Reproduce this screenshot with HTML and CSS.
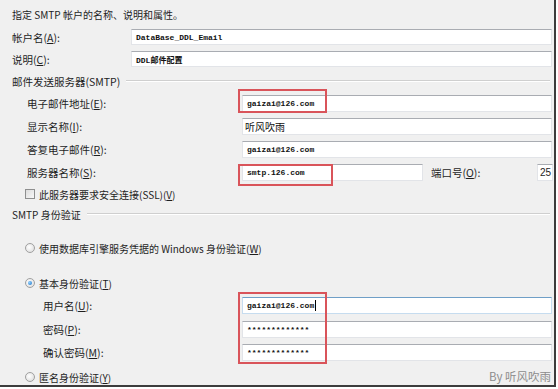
FILE: index.html
```html
<!DOCTYPE html>
<html>
<head>
<meta charset="utf-8">
<link rel="stylesheet" href="styles.css">
</head>
<body>
<div class="frame">
  <div class="intro">指定 SMTP 帐户的名称、说明和属性。</div>

  <div class="row top">
    <span class="label">帐户名(<u>A</u>):</span>
    <div class="field wide mono">DataBase_DDL_Email</div>
  </div>
  <div class="row top">
    <span class="label">说明(<u>C</u>):</span>
    <div class="field wide mono">DDL邮件配置</div>
  </div>

  <div class="group"><span>邮件发送服务器(SMTP)</span><i class="rule"></i></div>

  <div class="row sub">
    <span class="label">电子邮件地址(<u>E</u>):</span>
    <div class="field mono">gaizai@126.com</div>
  </div>
  <div class="row sub">
    <span class="label">显示名称(<u>I</u>):</span>
    <div class="field cjk">听风吹雨</div>
  </div>
  <div class="row sub">
    <span class="label">答复电子邮件(<u>R</u>):</span>
    <div class="field mono">gaizai@126.com</div>
  </div>
  <div class="row sub">
    <span class="label">服务器名称(<u>S</u>):</span>
    <div class="field server mono">smtp.126.com</div>
    <span class="port-label">端口号(<u>O</u>):</span>
    <div class="field port">25</div>
  </div>
  <div class="row check">
    <span class="box"></span>
    <span>此服务器要求安全连接(SSL)(<u>V</u>)</span>
  </div>

  <div class="group auth"><span>SMTP 身份验证</span><i class="rule"></i></div>

  <div class="row radio first">
    <span class="dot"></span>
    <span>使用数据库引擎服务凭据的 Windows 身份验证(<u>W</u>)</span>
  </div>
  <div class="row radio second">
    <span class="dot on"></span>
    <span>基本身份验证(<u>T</u>)</span>
  </div>
  <div class="row basic user">
    <span class="label">用户名(<u>U</u>):</span>
    <div class="field mono focus">gaizai@126.com<b class="caret"></b></div>
  </div>
  <div class="row basic">
    <span class="label">密码(<u>P</u>):</span>
    <div class="field mono">*************</div>
  </div>
  <div class="row basic">
    <span class="label">确认密码(<u>M</u>):</span>
    <div class="field mono">*************</div>
  </div>
  <div class="row radio last">
    <span class="dot"></span>
    <span>匿名身份验证(<u>Y</u>)</span>
  </div>

  <div class="mark m-email"></div>
  <div class="mark m-server"></div>
  <div class="mark m-user"></div>
  <div class="watermark">By 听风吹雨</div>
</div>
</body>
</html>
```

FILE: styles.css
```css
html, body {
  margin: 0;
  padding: 0;
  background: #ffffff;
}
body {
  font-family: "Noto Sans CJK SC", "Liberation Sans", sans-serif;
  font-size: 10.5px;
  color: #1e1e1e;
}
.frame {
  position: relative;
  width: 554px;
  height: 385px;
  background: #f0f0f0;
  border-right: 2px solid #3c3c3c;
  border-bottom: 2px solid #3c3c3c;
  box-sizing: content-box;
  display: flex;
  flex-direction: column;
}
u { text-decoration: underline; }

.intro {
  height: 22px;
  margin-top: 4px;
  line-height: 22px;
  padding-left: 12px;
  font-size: 10px;
  flex: none;
}
.row {
  display: flex;
  align-items: center;
  flex: none;
}
.row.top { height: 22px; padding-left: 12px; }
.row.top .label { width: 119px; }
.row.sub { height: 23px; padding-left: 27px; }
.row.sub .label { width: 215px; }
.row.basic { height: 23px; padding-left: 43px; }
.row.basic .label { width: 199px; }
.row.basic.user { height: 25px; }
.label { flex: none; white-space: nowrap; }

.field {
  height: 17px;
  box-sizing: border-box;
  background: #ffffff;
  border: 1px solid #e2e4e8;
  border-top-color: #a9acb2;
  flex: none;
  width: 310px;
  display: flex;
  align-items: center;
  padding-left: 4px;
  overflow: hidden;
  white-space: nowrap;
}
.row.top .field { height: 16px; }
.field.wide { width: 421px; }
.field.mono {
  font-family: "Liberation Mono", "Noto Sans CJK SC", monospace;
  font-size: 8px;
  font-weight: bold;
  color: #111;
}
.field.cjk { font-size: 10px; padding-left: 2px; color: #111; }
.field.server { width: 181px; }
.field.port {
  width: 16px;
  padding-left: 2px;
  font-family: "Liberation Sans", sans-serif;
  font-size: 10px;
}
.port-label { width: 106px; margin-left: 8px; }
.field.focus {
  border-color: #c6dcef;
  border-top-color: #6f9fc7;
}
.caret {
  display: inline-block;
  width: 1px;
  height: 11px;
  background: #000;
  margin-left: 1px;
}

.group {
  height: 22px;
  display: flex;
  align-items: center;
  padding-left: 12px;
  flex: none;
}
.group .rule {
  flex: 1;
  margin-left: 6px;
  margin-right: 4px;
  height: 0;
  border-top: 1px solid #cfcfcf;
  border-bottom: 1px solid #ffffff;
}
.group.auth { height: 20px; }
.group.auth span { font-size: 10px; }

.row.check { height: 20px; padding-left: 25px; font-size: 10px; }
.box {
  width: 10px;
  height: 10px;
  box-sizing: border-box;
  border: 1px solid #8e8f8f;
  background: linear-gradient(135deg, #dcdcdc, #f8f8f8);
  margin-right: 4px;
  flex: none;
}
.row.radio { height: 20px; padding-left: 25px; font-size: 10px; }
.row.radio.first { margin-top: 14px; }
.row.radio.second { margin-top: 15px; }
.row.radio.last { margin-top: 3px; }
.dot {
  width: 10px;
  height: 10px;
  box-sizing: border-box;
  border-radius: 50%;
  border: 1px solid #a0a0a0;
  background: radial-gradient(circle at 40% 40%, #ffffff, #d8d8d8);
  margin-right: 4px;
  flex: none;
  position: relative;
}
.dot.on::after {
  content: "";
  position: absolute;
  left: 2px;
  top: 2px;
  width: 4px;
  height: 4px;
  border-radius: 50%;
  background: radial-gradient(circle at 35% 35%, #8fd0ff, #1a6fc2);
}

.mark {
  position: absolute;
  border: 2px solid #d9545a;
  box-sizing: border-box;
}
.m-email { left: 238px; top: 89px; width: 89px; height: 24px; }
.m-server { left: 238px; top: 164px; width: 95px; height: 22px; }
.m-user { left: 238px; top: 292px; width: 89px; height: 72px; }

.watermark {
  position: absolute;
  right: 3px;
  bottom: 1px;
  font-family: "Noto Sans CJK SC", sans-serif;
  font-size: 11.5px;
  color: #8c8c8c;
}
```
